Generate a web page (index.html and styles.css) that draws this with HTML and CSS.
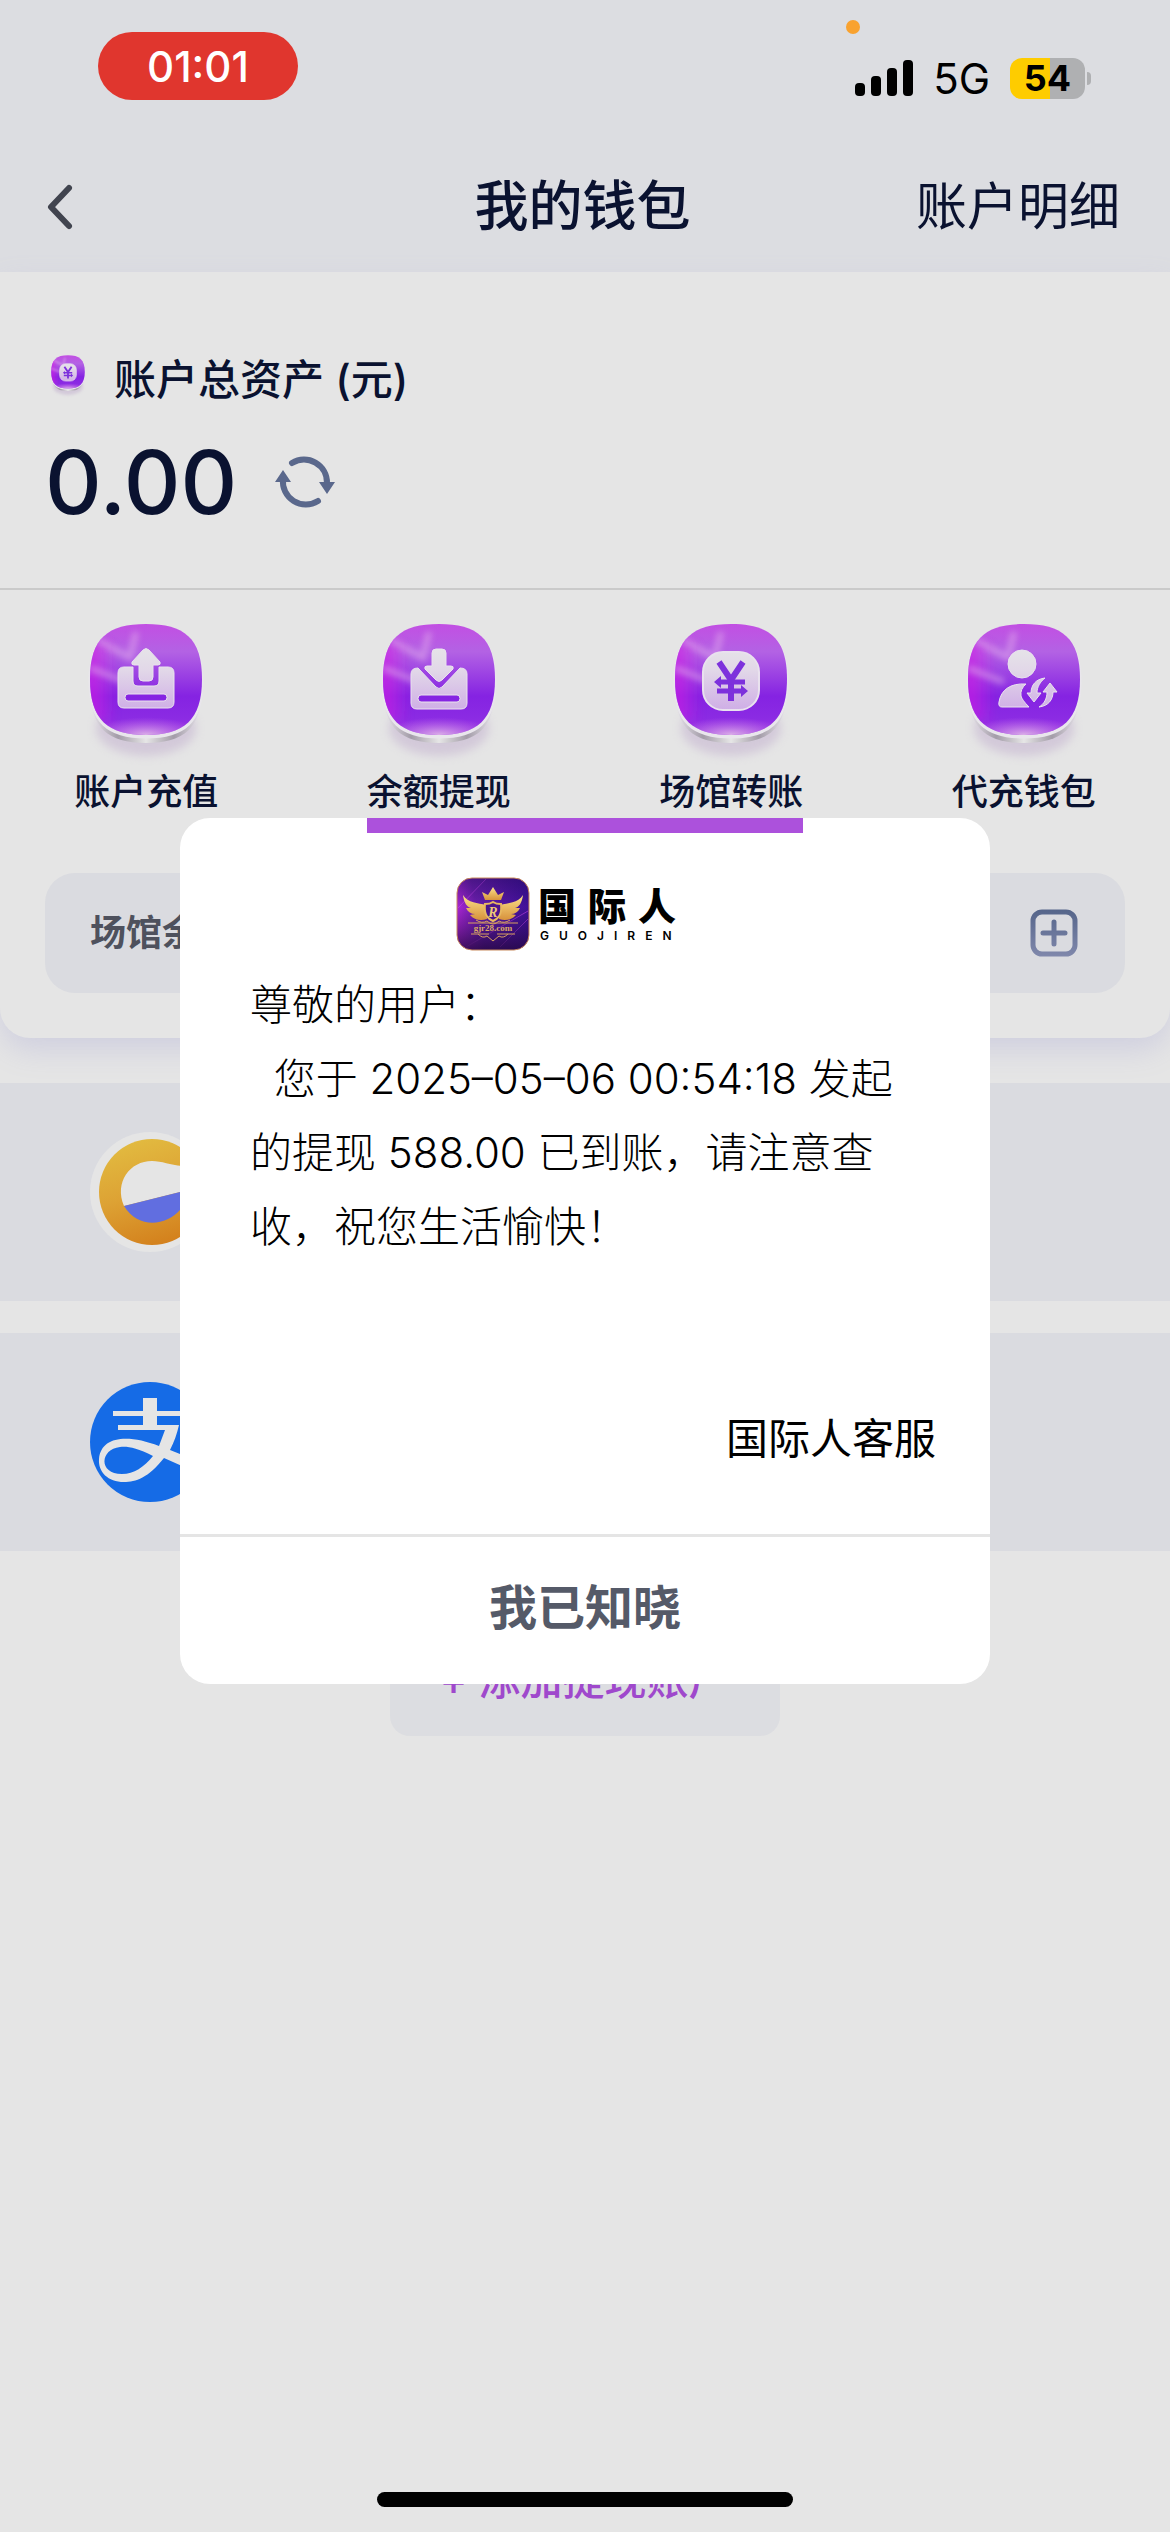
FILE: index.html
```html
<!DOCTYPE html>
<html lang="zh-CN">
<head>
    <meta charset="UTF-8">
    <meta name="viewport" content="width=device-width, initial-scale=1.0">
    <title>我的钱包</title>
    <link rel="stylesheet" href="styles.css">
</head>
<body>
    <svg class="defs" width="0" height="0" aria-hidden="true">
        <defs>
            <linearGradient id="tile-fill" x1="0" y1="0" x2="0" y2="1">
                <stop offset="0" stop-color="#c24fe3"/>
                <stop offset="0.25" stop-color="#b362e4"/>
                <stop offset="0.65" stop-color="#8523e2"/>
                <stop offset="0.85" stop-color="#8b2be3"/>
                <stop offset="1" stop-color="#a03ae4"/>
            </linearGradient>
            <linearGradient id="tile-side" x1="0" y1="0" x2="1" y2="0">
                <stop offset="0" stop-color="#d21ee4"/>
                <stop offset="0.25" stop-color="#d21ee4" stop-opacity="0"/>
            </linearGradient>
            <linearGradient id="tile-rim" x1="0" y1="0" x2="1" y2="0">
                <stop offset="0" stop-color="#e9e6ec"/>
                <stop offset="0.25" stop-color="#a39ca8"/>
                <stop offset="0.5" stop-color="#e6e6e6"/>
                <stop offset="0.75" stop-color="#a39ca8"/>
                <stop offset="1" stop-color="#e9e6ec"/>
            </linearGradient>
            <radialGradient id="tile-glow" cx="0.5" cy="1" r="0.5" gradientTransform="translate(0 0.68) scale(1 0.32)">
                <stop offset="0" stop-color="#dcb0e8"/>
                <stop offset="1" stop-color="#c070e8" stop-opacity="0"/>
            </radialGradient>
            <linearGradient id="glyph-fill" x1="0" y1="28" x2="0" y2="90" gradientUnits="userSpaceOnUse">
                <stop offset="0" stop-color="#e6e4e8"/>
                <stop offset="0.35" stop-color="#e2d8e8"/>
                <stop offset="1" stop-color="#cfaee6"/>
            </linearGradient>
            <filter id="soft" x="-20%" y="-20%" width="140%" height="140%">
                <feGaussianBlur stdDeviation="5"/>
            </filter>
            <filter id="streak" x="-20%" y="-20%" width="140%" height="140%">
                <feGaussianBlur stdDeviation="3"/>
            </filter>
            <path id="squircle" d="M60 4C98 4 116 18 116 59C116 100 98 115 60 115C22 115 4 100 4 59C4 18 22 4 60 4Z"/>
            <clipPath id="tile-clip"><use href="#squircle"/></clipPath>
            <symbol id="tile" viewBox="0 0 120 146">
                <ellipse cx="60" cy="108" rx="50" ry="28" fill="#b8a0c8" opacity="0.4" filter="url(#soft)"/>
                <use href="#squircle" y="8" fill="url(#tile-rim)"/>
                <use href="#squircle" y="2" fill="#e9e6ec" stroke="#e9e6ec" stroke-width="3"/>
                <use href="#squircle" fill="url(#tile-fill)"/>
                <g clip-path="url(#tile-clip)">
                    <rect x="0" y="22" width="120" height="80" fill="url(#tile-side)" opacity="0.8" filter="url(#soft)"/>
                    <path d="M12 20L44 38L50 12M4 48L40 62" fill="none" stroke="#e0a8ec" stroke-width="6" opacity="0.6" filter="url(#streak)"/>
                </g>
                <use href="#squircle" fill="url(#tile-glow)"/>
            </symbol>
            <symbol id="yen" viewBox="0 0 120 146">
                <rect x="32" y="32" width="56" height="58" rx="20" fill="url(#glyph-fill)" stroke="#e9e2ee" stroke-width="2"/>
                <path d="M48 42L60 60L72 42M60 58V81" fill="none" stroke="#7d31dc" stroke-width="6"/>
                <path d="M74 62H48M46 71H72" fill="none" stroke="#7d31dc" stroke-width="5"/>
                <path d="M50 56L43 62L50 68ZM70 65L77 71L70 77Z" fill="#7d31dc"/>
            </symbol>
        </defs>
    </svg>

    <header class="header">
        <div class="status">
            <span class="status-time">01:01</span>
            <div class="status-right">
                <i class="status-dot"></i>
                <svg class="signal" width="60" height="38" viewBox="0 0 60 38">
                    <rect x="1" y="24" width="10" height="13" rx="4"/>
                    <rect x="17" y="17" width="10" height="20" rx="4"/>
                    <rect x="33" y="9" width="10" height="28" rx="4"/>
                    <rect x="49" y="1" width="10" height="36" rx="4"/>
                </svg>
                <span class="status-net">5G</span>
                <span class="battery">54</span>
            </div>
        </div>
        <nav class="nav">
            <a class="nav-back" href="#" aria-label="返回">
                <svg width="30" height="48" viewBox="0 0 30 48">
                    <path d="M24 5L6 24L24 43" fill="none" stroke="#41444f" stroke-width="6" stroke-linecap="round" stroke-linejoin="round"/>
                </svg>
            </a>
            <h1 class="nav-title">我的钱包</h1>
            <a class="nav-link" href="#">账户明细</a>
        </nav>
    </header>

    <main>
        <section class="wallet">
            <div class="assets">
                <div class="assets-label">
                    <svg width="36" height="44" viewBox="0 0 120 146">
                        <use href="#tile"/>
                        <use href="#yen"/>
                    </svg>
                    <span>账户总资产 (元)</span>
                </div>
                <div class="assets-sum">
                    <span>0.00</span>
                    <button class="refresh" aria-label="刷新">
                        <svg width="60" height="54" viewBox="0 0 60 54">
                            <g fill="none" stroke="#5a688c" stroke-width="6" stroke-linecap="round">
                                <path d="M17 8A23 23 0 0 1 52 28"/>
                                <path d="M8 24A23 23 0 0 0 43 46"/>
                            </g>
                            <path d="M0 27L8 15L16 27ZM44 27L52 39L60 27Z" fill="#5a688c"/>
                        </svg>
                    </button>
                </div>
            </div>

            <div class="actions">
                <a class="action" href="#">
                    <svg width="120" height="146" viewBox="0 0 120 146">
                        <use href="#tile"/>
                        <g fill="url(#glyph-fill)" stroke="#e9e2ee" stroke-width="1">
                            <path fill-rule="evenodd" d="M38 47H47V61Q47 66 52 66H68Q73 66 73 61V47H82Q88 47 88 53V82Q88 88 82 88H38Q32 88 32 82V53Q32 47 38 47ZM42 74Q39 74 39 77.500T42 81H78Q81 81 81 77.500T78 74Z"/>
                            <path d="M57 30Q60 27 63 30L74 42Q75 45 72 45H67V57Q67 61 63 61H57Q53 61 53 57V45H48Q45 45 46 42Z"/>
                        </g>
                    </svg>
                    <span>账户充值</span>
                </a>
                <a class="action" href="#">
                    <svg width="120" height="146" viewBox="0 0 120 146">
                        <use href="#tile"/>
                        <g fill="url(#glyph-fill)" stroke="#e9e2ee" stroke-width="1">
                            <path fill-rule="evenodd" d="M39 48L57 67Q60 70 63 67L81 48Q88 48 88 54V83Q88 89 82 89H38Q32 89 32 83V54Q32 48 39 48ZM42 75Q39 75 39 78.500T42 82H78Q81 82 81 78.500T78 75Z"/>
                            <path d="M57 29H63Q67 29 67 33V46H72Q75 46 74 49L63 60Q60 63 57 60L46 49Q45 46 48 46H53V33Q53 29 57 29Z"/>
                        </g>
                    </svg>
                    <span>余额提现</span>
                </a>
                <a class="action" href="#">
                    <svg width="120" height="146" viewBox="0 0 120 146">
                        <use href="#tile"/>
                        <use href="#yen"/>
                    </svg>
                    <span>场馆转账</span>
                </a>
                <a class="action" href="#">
                    <svg width="120" height="146" viewBox="0 0 120 146">
                        <use href="#tile"/>
                        <g fill="url(#glyph-fill)" stroke="#e9e2ee" stroke-width="1">
                            <circle cx="58" cy="44" r="14"/>
                            <path d="M62 64Q56 69 57 76Q58 80 65 87H38Q34 87 35 82C37 70 46 63 62 64Z"/>
                            <path d="M81 58C72 59 67 65 67 73H63L70 82L77 73H73C73 67 76 62 81 58Z"/>
                            <path d="M75 87C84 86 89 80 89 72H93L86 63L79 72H83C83 79 80 84 75 87Z"/>
                        </g>
                    </svg>
                    <span>代充钱包</span>
                </a>
            </div>

            <div class="venue">
                <span>场馆余额</span>
                <button class="venue-add" aria-label="展开">
                    <svg width="48" height="48" viewBox="0 0 48 48">
                        <linearGradient id="plus-line" x1="0" y1="0" x2="0" y2="48" gradientUnits="userSpaceOnUse">
                            <stop offset="0" stop-color="#55658a"/>
                            <stop offset="1" stop-color="#8088ac"/>
                        </linearGradient>
                        <g fill="none" stroke="url(#plus-line)" stroke-width="5" stroke-linecap="round">
                            <rect x="3" y="3" width="42" height="42" rx="9"/>
                            <path d="M13 24H35M24 13V35"/>
                        </g>
                    </svg>
                </button>
            </div>
        </section>

        <ul class="accounts">
            <li class="account">
                <svg width="120" height="120" viewBox="0 0 120 120">
                    <linearGradient id="gold" x1="0.3" y1="0" x2="0.6" y2="1">
                        <stop offset="0" stop-color="#e2bb40"/>
                        <stop offset="0.5" stop-color="#dda234"/>
                        <stop offset="1" stop-color="#d3801c"/>
                    </linearGradient>
                    <circle cx="60" cy="60" r="60" fill="#e5e5e5"/>
                    <circle cx="62" cy="60" r="53" fill="url(#gold)"/>
                    <path d="M34 74C24 50 40 29 62 29C72 29 80 33 92 34L110 56L90 60Z" fill="#e5e5e5"/>
                    <path d="M34 74L90 60L110 56L90 78C76 94 48 97 34 74Z" fill="#616ee0"/>
                </svg>
            </li>
            <li class="account">
                <svg width="120" height="120" viewBox="0 0 120 120">
                    <circle cx="60" cy="60" r="60" fill="#156be6"/>
                    <path d="M53 16H67V29H97V34H67V43H89C87 52 84 60 80 68L110 80V92L74 76C58 96 46 100 34 100C18 100 8 90 9 77C11 54 38 52 69 64L75 48H28V43H53V34H23V29H53ZM63 74C46 65 36 64 30 65C10 67 8 92 32 92C44 92 54 85 63 74Z" fill="#e5e5e5" fill-rule="evenodd"/>
                </svg>
            </li>
        </ul>

        <button class="add-account">+ 添加提现账户</button>
    </main>

    <div class="mask">
        <div class="dialog" role="dialog" aria-modal="true">
            <div class="dialog-bar"></div>
            <div class="brand">
                <svg class="brand-icon" width="74" height="74" viewBox="0 0 74 74">
                    <defs>
                        <linearGradient id="brand-bg" x1="0" y1="0.6" x2="1" y2="0.4">
                            <stop offset="0" stop-color="#b428d8"/>
                            <stop offset="0.3" stop-color="#6a1eac"/>
                            <stop offset="1" stop-color="#401098"/>
                        </linearGradient>
                        <linearGradient id="brand-dark" x1="0" y1="0" x2="0" y2="1">
                            <stop offset="0" stop-color="#1c0850" stop-opacity="0.4"/>
                            <stop offset="0.4" stop-color="#1c0850" stop-opacity="0"/>
                            <stop offset="1" stop-color="#20063c" stop-opacity="0.8"/>
                        </linearGradient>
                        <linearGradient id="brand-gold" x1="0" y1="0" x2="0" y2="1">
                            <stop offset="0" stop-color="#fbe28a"/>
                            <stop offset="1" stop-color="#d8923c"/>
                        </linearGradient>
                    </defs>
                    <rect x="1" y="1" width="72" height="72" rx="15" fill="url(#brand-bg)"/>
                    <path d="M2 31L30 2M10 70L72 34M44 70L72 42" stroke="#c040e8" opacity="0.7"/>
                    <rect x="1" y="1" width="72" height="72" rx="15" fill="url(#brand-dark)" stroke="#c88a5c"/>
                    <g fill="url(#brand-gold)">
                        <path d="M26 15L32 18L37 10L42 18L48 15L45 23H29Z"/>
                        <path d="M30 28C22 26 12 26 7 18C8 26 11 30 15 31L10 31C12 35 15 37 19 37L14 38C18 43 25 44 31 42Z"/>
                        <path d="M44 28C52 26 62 26 67 18C66 26 63 30 59 31L64 31C62 35 59 37 55 37L60 38C56 43 49 44 43 42Z"/>
                    </g>
                    <path d="M29 27Q34 27 37 25Q40 27 45 27C46 36 44 41 37 44C30 41 28 36 29 27Z" fill="#4a148c" stroke="#e8b860" stroke-width="2"/>
                    <path d="M12 46H62M15 57H33M41 57H59M20 43Q26 47 31 44Q37 50 43 44Q48 47 54 43M22 57Q27 62 31 59L37 64L43 59Q47 62 52 57" fill="none" stroke="#d8a060" stroke-width="1"/>
                    <text class="brand-letter" x="37" y="40" text-anchor="middle">R</text>
                    <text class="brand-url" x="37" y="54" text-anchor="middle">gjr28.com</text>
                </svg>
                <div class="brand-name">
                    <span class="brand-cn">国际人</span>
                    <span class="brand-en">GUOJIREN</span>
                </div>
            </div>
            <div class="dialog-text">
                <p>尊敬的用户：</p>
                <p>&nbsp;&nbsp;您于 2025–05–06 00:54:18 发起<br>的提现 588.00 已到账，请注意查<br>收，祝您生活愉快！</p>
            </div>
            <p class="dialog-sign">国际人客服</p>
            <button class="dialog-ok">我已知晓</button>
        </div>
    </div>

    <div class="home-bar"></div>
</body>
</html>
```
FILE: styles.css
```css
* {
    box-sizing: border-box;
    margin: 0;
    padding: 0;
}

body {
    min-height: 100vh;
    background: #e5e5e5;
    color: #0a1230;
    font-family: Inter, "Noto Sans CJK SC", sans-serif;
    font-size: 42px;
}

a {
    color: inherit;
    text-decoration: none;
}

button {
    border: 0;
    background: none;
    color: inherit;
    font: inherit;
    cursor: pointer;
}

svg {
    display: block;
}

.defs {
    position: absolute;
}

/* header */

.header {
    background: #dcdde1;
}

.status {
    display: flex;
    justify-content: space-between;
    height: 142px;
    padding: 32px 79px 0 98px;
    color: #000;
}

.status-time {
    width: 200px;
    height: 68px;
    border-radius: 34px;
    background: #e0362e;
    color: #fff;
    font-size: 42px;
    font-weight: 500;
    line-height: 70px;
    text-align: center;
}

.status-right {
    position: relative;
    display: flex;
    align-items: center;
    height: 92px;
}

.status-dot {
    position: absolute;
    top: -12px;
    left: -8px;
    width: 14px;
    height: 14px;
    border-radius: 50%;
    background: #f9a22f;
}

.signal {
    margin-right: 19px;
}

.status-net {
    margin-right: 20px;
    font-size: 42px;
}

.battery {
    position: relative;
    width: 75px;
    height: 41px;
    margin-right: 6px;
    border-radius: 12px;
    background: linear-gradient(90deg, #fecc00 54%, #afb0b2 54%);
    font-size: 36px;
    font-weight: 700;
    line-height: 41px;
    text-align: center;
}

.battery::after {
    content: "";
    position: absolute;
    top: 14px;
    right: -6px;
    width: 4px;
    height: 13px;
    border-radius: 0 4px 4px 0;
    background: #afb0b2;
}

.nav {
    display: grid;
    grid-template-columns: 1fr auto 1fr;
    align-items: center;
    height: 130px;
    padding: 0 50px 0 45px;
}

.nav-back {
    width: 30px;
}

.nav-title {
    font-size: 54px;
    font-weight: 500;
    line-height: 80px;
}

.nav-link {
    justify-self: end;
    font-size: 51px;
    line-height: 80px;
}

/* balance */

.wallet {
    padding-bottom: 45px;
    border-radius: 0 0 30px 30px;
    background: #e5e5e5;
    box-shadow: 0 12px 30px #cfcfdf;
}

.assets {
    height: 318px;
    padding: 74px 45px 0;
    border-bottom: 2px solid #cacaca;
    font-weight: 500;
}

.assets-label {
    display: flex;
    align-items: center;
    gap: 28px;
    height: 60px;
    padding-left: 5px;
}

.assets-sum {
    display: flex;
    align-items: center;
    gap: 38px;
    height: 152px;
    font-size: 88px;
}

.actions {
    display: grid;
    grid-template-columns: repeat(4, 1fr);
    height: 283px;
    padding-top: 30px;
}

.action {
    display: flex;
    flex-direction: column;
    align-items: center;
    font-size: 36px;
    font-weight: 500;
    line-height: 52px;
}

.venue {
    display: flex;
    align-items: center;
    justify-content: space-between;
    height: 120px;
    margin: 0 45px;
    padding: 0 47px 0 45px;
    border-radius: 30px;
    background: #dadbe0;
    color: #4e515d;
    font-size: 36px;
    font-weight: 700;
    line-height: 48px;
}

/* payout accounts */

.accounts {
    display: flex;
    flex-direction: column;
    gap: 32px;
    margin-top: 45px;
    list-style: none;
}

.account {
    position: relative;
    display: flex;
    align-items: center;
    height: 218px;
    padding: 0 90px;
    background: #dadbe0;
}

.add-account {
    display: block;
    width: 390px;
    height: 120px;
    margin: 65px auto 0;
    border-radius: 20px;
    background: #dcdde1;
    color: #9f48cc;
    font-weight: 500;
}

/* notice dialog */

.mask {
    position: fixed;
    inset: 0;
    display: flex;
    align-items: center;
    padding: 0 180px 31px;
}

.dialog {
    flex: 1;
    overflow: hidden;
    border-radius: 30px;
    background: #fff;
    color: #000;
}

.dialog-bar {
    width: 436px;
    height: 15px;
    margin: 0 auto;
    background: #ac51dc;
}

.brand {
    display: flex;
    align-items: center;
    justify-content: center;
    gap: 8px;
    margin-top: 44px;
    padding-right: 36px;
}

.brand-letter {
    fill: #f0c878;
    font: italic 700 14px "Liberation Serif", serif;
}

.brand-url {
    fill: #dca868;
    font: 700 9px "Liberation Serif", serif;
}

.brand-name {
    display: flex;
    flex-direction: column;
    width: 140px;
    white-space: nowrap;
}

.brand-cn {
    font-size: 38px;
    font-weight: 900;
    letter-spacing: 12px;
    line-height: 44px;
}

.brand-en {
    padding-left: 2px;
    font-size: 12px;
    font-weight: 600;
    letter-spacing: 10px;
    line-height: 16px;
}

.dialog-text {
    padding: 17px 70px 0;
    font-weight: 300;
    line-height: 74px;
}

.dialog-sign {
    padding: 138px 54px 58px;
    line-height: 74px;
    text-align: right;
}

.dialog-ok {
    display: block;
    width: 100%;
    height: 150px;
    padding-bottom: 12px;
    border-top: 3px solid #e5e5e5;
    color: #555a68;
    font-size: 48px;
    font-weight: 700;
}

.home-bar {
    position: fixed;
    bottom: 25px;
    left: 50%;
    width: 416px;
    height: 15px;
    border-radius: 8px;
    background: #000;
    transform: translateX(-50%);
}
```
